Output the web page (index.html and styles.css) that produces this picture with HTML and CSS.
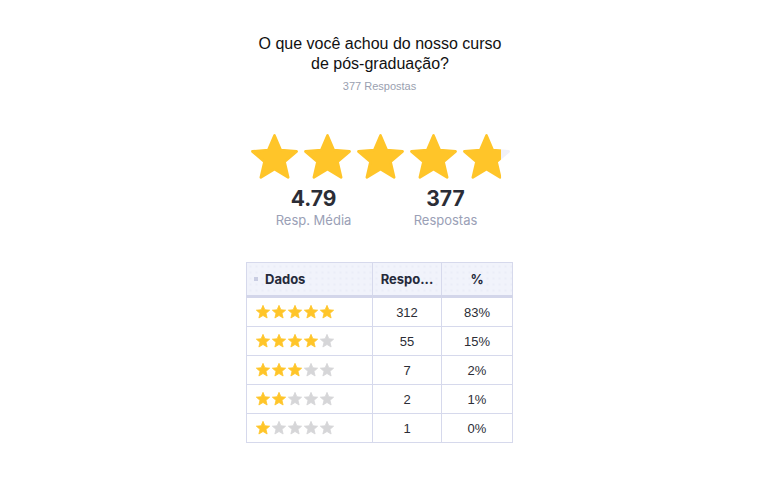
FILE: index.html
```html
<!DOCTYPE html>
<html>
<head>
<meta charset="utf-8">
<link rel="stylesheet" href="styles.css">
</head>
<body>
<svg width="0" height="0" class="defs">
  <defs>
    <symbol id="star" viewBox="0 0 24 24">
      <path d="M12 17.27L18.18 21l-1.64-7.03L22 9.24l-7.19-.61L12 2 9.19 8.63 2 9.24l5.46 4.73L5.82 21z" stroke-linejoin="round" stroke-width="1.2"/>
    </symbol>
    <linearGradient id="part" x1="0" x2="1" y1="0" y2="0">
      <stop offset="0.82" stop-color="#ffc529"/>
      <stop offset="0.82" stop-color="#f1f1f8"/>
    </linearGradient>
  </defs>
</svg>
<main class="page">
  <h1 class="title">O que você achou do nosso curso<br>de pós-graduação?</h1>
  <p class="subtitle">377 Respostas</p>

  <div class="bigstars">
    <svg class="bigstar on"><use href="#star"/></svg>
    <svg class="bigstar on"><use href="#star"/></svg>
    <svg class="bigstar on"><use href="#star"/></svg>
    <svg class="bigstar on"><use href="#star"/></svg>
    <svg class="bigstar partial"><use href="#star"/></svg>
  </div>

  <div class="stats">
    <div class="stat"><div class="num">4.79</div><div class="lbl">Resp. Média</div></div>
    <div class="stat"><div class="num">377</div><div class="lbl">Respostas</div></div>
  </div>

  <table class="grid">
    <thead>
      <tr><th class="c1"><span class="dot"></span>Dados</th><th class="c2">Respo...</th><th class="c3">%</th></tr>
    </thead>
    <tbody>
      <tr><td class="c1"><span class="stars"><svg class="s on"><use href="#star"/></svg><svg class="s on"><use href="#star"/></svg><svg class="s on"><use href="#star"/></svg><svg class="s on"><use href="#star"/></svg><svg class="s on"><use href="#star"/></svg></span></td><td class="c2">312</td><td class="c3">83%</td></tr>
      <tr><td class="c1"><span class="stars"><svg class="s on"><use href="#star"/></svg><svg class="s on"><use href="#star"/></svg><svg class="s on"><use href="#star"/></svg><svg class="s on"><use href="#star"/></svg><svg class="s off"><use href="#star"/></svg></span></td><td class="c2">55</td><td class="c3">15%</td></tr>
      <tr><td class="c1"><span class="stars"><svg class="s on"><use href="#star"/></svg><svg class="s on"><use href="#star"/></svg><svg class="s on"><use href="#star"/></svg><svg class="s off"><use href="#star"/></svg><svg class="s off"><use href="#star"/></svg></span></td><td class="c2">7</td><td class="c3">2%</td></tr>
      <tr><td class="c1"><span class="stars"><svg class="s on"><use href="#star"/></svg><svg class="s on"><use href="#star"/></svg><svg class="s off"><use href="#star"/></svg><svg class="s off"><use href="#star"/></svg><svg class="s off"><use href="#star"/></svg></span></td><td class="c2">2</td><td class="c3">1%</td></tr>
      <tr><td class="c1"><span class="stars"><svg class="s on"><use href="#star"/></svg><svg class="s off"><use href="#star"/></svg><svg class="s off"><use href="#star"/></svg><svg class="s off"><use href="#star"/></svg><svg class="s off"><use href="#star"/></svg></span></td><td class="c2">1</td><td class="c3">0%</td></tr>
    </tbody>
  </table>
</main>
</body>
</html>
```

FILE: styles.css
```css
html, body {
  margin: 0;
  padding: 0;
  background: #ffffff;
}
.defs {
  position: absolute;
  width: 0;
  height: 0;
}
.page {
  display: flex;
  flex-direction: column;
  align-items: center;
  font-family: "Liberation Sans", Arial, sans-serif;
  padding-top: 34px;
}
.title {
  margin: 0;
  font-size: 16px;
  font-weight: normal;
  line-height: 20px;
  color: #111111;
  text-align: center;
  transform: translateX(0.5px);
}
.subtitle {
  margin: 5px 0 0;
  font-size: 11px;
  line-height: 14px;
  color: #9a9fb0;
}
.bigstars {
  display: flex;
  margin-top: 38px;
  transform: translateX(1px);
}
.bigstar {
  width: 53px;
  height: 53px;
}
.bigstar.on {
  fill: #ffc529;
  stroke: #ffc529;
}
.bigstar.partial {
  fill: url(#part);
  stroke: url(#part);
}
.stats {
  display: flex;
  margin-top: 3px;
}
.stat {
  width: 132px;
  text-align: center;
}
.num {
  font-family: "Inter", "Liberation Sans", sans-serif;
  font-weight: 700;
  font-size: 21px;
  line-height: 24px;
  color: #2b2d36;
}
.lbl {
  font-family: "Inter", "Liberation Sans", sans-serif;
  font-size: 13px;
  line-height: 18px;
  color: #9aa0b6;
}
.grid {
  margin-top: 33px;
  border-collapse: collapse;
  border: 1px solid #d6d9ec;
  font-size: 13px;
  color: #2b2d36;
}
.grid th {
  height: 32px;
  padding: 0;
  background-color: #f1f3fb;
  background-image: radial-gradient(circle, #e2e5f3 0.6px, transparent 0.8px);
  background-size: 6px 6px;
  border: 1px solid #d6d9ec;
  border-bottom: 3px solid #d3d6ea;
  font-family: "Inter", "Liberation Sans", sans-serif;
  font-weight: 700;
  font-size: 13px;
  color: #262a3a;
}
.grid td {
  height: 28px;
  padding: 0;
  border: 1px solid #d6d9ec;
  text-align: center;
}
.c1 {
  width: 125px;
  text-align: left;
}
.grid th.c1 {
  text-align: left;
  padding-left: 7px;
  width: 118px;
}
.c2 {
  width: 68px;
}
.c3 {
  width: 70px;
}
.dot {
  display: inline-block;
  width: 4px;
  height: 4px;
  background: #c9cde2;
  margin-right: 7px;
  vertical-align: middle;
  position: relative;
  top: -1px;
}
.grid td.c1 {
  text-align: left;
  padding-left: 8px;
  width: 117px;
}
.stars {
  display: flex;
  gap: 0;
}
.s {
  width: 16px;
  height: 16px;
}
.s.on {
  fill: #ffc529;
  stroke: #ffc529;
}
.s.off {
  fill: #d6d6d8;
  stroke: #d6d6d8;
}
```
